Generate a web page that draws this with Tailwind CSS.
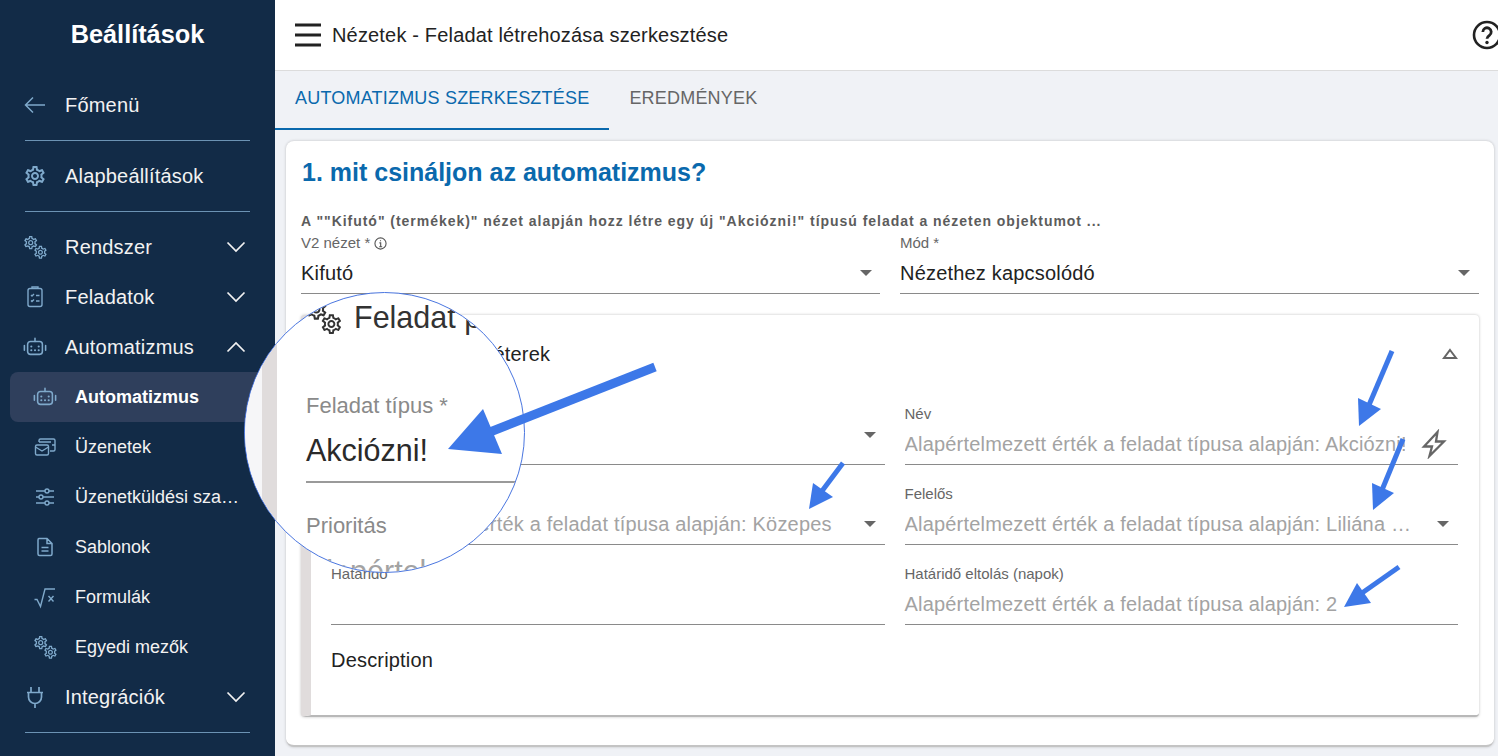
<!DOCTYPE html>
<html lang="hu">
<head>
  <meta charset="UTF-8">
  <meta name="viewport" content="width=device-width, initial-scale=1.0">
  <title>Nézetek - Feladat létrehozása szerkesztése</title>
  <script src="https://cdn.jsdelivr.net/npm/@tailwindcss/browser@4"></script>
</head>
<body class="relative h-[756px] w-[1498px] overflow-hidden bg-[#f0f2f6] font-['Liberation_Sans',Arial,sans-serif] text-[#222]">
  <svg class="absolute h-0 w-0">
    <defs>
      <symbol id="gear" viewBox="0 0 24 24">
        <path fill="currentColor" d="M19.43 12.98c.04-.32.07-.64.07-.98 0-.34-.03-.66-.07-.98l2.11-1.65c.19-.15.24-.42.12-.64l-2-3.46c-.09-.16-.26-.25-.44-.25-.06 0-.12.01-.17.03l-2.49 1c-.52-.4-1.08-.73-1.69-.98l-.38-2.65C14.46 2.18 14.25 2 14 2h-4c-.25 0-.46.18-.49.42l-.38 2.65c-.61.25-1.17.59-1.69.98l-2.49-1c-.06-.02-.12-.03-.18-.03-.17 0-.34.09-.43.25l-2 3.46c-.13.22-.07.49.12.64l2.11 1.65c-.04.32-.07.65-.07.98 0 .33.03.66.07.98l-2.11 1.65c-.19.15-.24.42-.12.64l2 3.46c.09.16.26.25.44.25.06 0 .12-.01.17-.03l2.49-1c.52.4 1.08.73 1.69.98l.38 2.65c.03.24.24.42.49.42h4c.25 0 .46-.18.49-.42l.38-2.65c.61-.25 1.17-.59 1.69-.98l2.49 1c.06.02.12.03.18.03.17 0 .34-.09.43-.25l2-3.46c.12-.22.07-.49-.12-.64l-2.11-1.65zm-1.98-1.71c.04.31.05.52.05.73 0 .21-.02.43-.05.73l-.14 1.13.89.7 1.08.84-.7 1.21-1.27-.51-1.04-.42-.9.68c-.43.32-.84.56-1.25.73l-1.06.43-.16 1.13-.2 1.35h-1.4l-.19-1.35-.16-1.13-1.06-.43c-.43-.18-.83-.41-1.23-.71l-.91-.7-1.06.43-1.27.51-.7-1.21 1.08-.84.89-.7-.14-1.13c-.03-.31-.05-.54-.05-.74s.02-.43.05-.73l.14-1.13-.89-.7-1.08-.84.7-1.21 1.27.51 1.04.42.9-.68c.43-.32.84-.56 1.25-.73l1.06-.43.16-1.13.2-1.35h1.39l.19 1.35.16 1.13 1.06.43c.43.18.83.41 1.23.71l.91.7 1.06-.43 1.27-.51.7 1.21-1.07.85-.89.7.14 1.13zM12 8c-2.21 0-4 1.79-4 4s1.79 4 4 4 4-1.79 4-4-1.79-4-4-4zm0 6c-1.1 0-2-.9-2-2s.9-2 2-2 2 .9 2 2-.9 2-2 2z"/>
      </symbol>
      <symbol id="gears" viewBox="0 0 26 26">
        <use href="#gear" x="0.700" y="0.700" width="16" height="16"/>
        <use href="#gear" x="10.700" y="10.500" width="15.500" height="15.500"/>
      </symbol>
      <symbol id="robot" viewBox="0 0 26 24" fill="none" stroke="currentColor" stroke-width="1.700">
        <rect x="5" y="6" width="16" height="14" rx="3"/>
        <path d="M13 6V2.500M1.500 10.500v5M24.500 10.500v5" stroke-linecap="round"/>
        <path d="M9 11.500h.01M17 11.500h.01M9 15.500h.01M13 15.500h.01M17 15.500h.01" stroke-width="2.300" stroke-linecap="round"/>
      </symbol>
      <symbol id="chev-down" viewBox="0 0 24 24" fill="none" stroke="currentColor" stroke-width="1.700">
        <path d="M3.500 7.500 12 16l8.500-8.500"/>
      </symbol>
    </defs>
  </svg>

  <div class="flex h-full">
    <!-- Oldalsáv -->
    <aside class="h-full w-[275px] shrink-0 bg-[#122b47] text-[#f2f2f2]">
      <div class="h-[80px] pt-[18px] text-center text-[25.300px] leading-[32px] font-bold text-white">Beállítások</div>

      <a class="flex h-[50px] items-center pl-[23px] text-[20px] tracking-[0.190px]">
        <span class="w-[42px] text-[#7fa9cb]">
          <svg class="h-6 w-6" viewBox="0 0 24 24" fill="none" stroke="currentColor" stroke-width="1.500"><path d="M22 12H2.500M10 4.500 2.500 12l7.500 7.500"/></svg>
        </span>
        Főmenü
      </a>
      <div class="mx-[25px] my-[10px] border-t border-[#6c93b4]"></div>
      <a class="flex h-[50px] items-center pl-[23px] text-[20px] tracking-[0.190px]">
        <span class="w-[42px] text-[#7fa9cb]"><svg class="h-6 w-6"><use href="#gear"/></svg></span>
        Alapbeállítások
      </a>
      <div class="mx-[25px] my-[10px] border-t border-[#6c93b4]"></div>

      <a class="flex h-[50px] items-center pl-[23px] text-[20px] tracking-[0.190px]">
        <span class="w-[42px] text-[#7fa9cb]"><svg class="ml-[-1px] h-[26px] w-[26px]"><use href="#gears"/></svg></span>
        Rendszer
        <svg class="mr-[27px] ml-auto h-6 w-6"><use href="#chev-down"/></svg>
      </a>
      <a class="flex h-[50px] items-center pl-[23px] text-[20px] tracking-[0.190px]">
        <span class="w-[42px] text-[#7fa9cb]">
          <svg class="h-6 w-6" viewBox="0 0 24 24" fill="none" stroke="currentColor" stroke-width="1.400"><rect x="5" y="3.500" width="14" height="18" rx="2"/><path d="M9 3.500V2h6v1.500M8 10l1 1 2-2M8 15.500l1 1 2-2M13 10.500h3.500M13 16h3.500"/></svg>
        </span>
        Feladatok
        <svg class="mr-[27px] ml-auto h-6 w-6"><use href="#chev-down"/></svg>
      </a>
      <a class="flex h-[50px] items-center pl-[23px] text-[20px] tracking-[0.190px]">
        <span class="w-[42px] text-[#7fa9cb]"><svg class="h-6 w-6"><use href="#robot"/></svg></span>
        Automatizmus
        <svg class="mr-[27px] ml-auto h-6 w-6 rotate-180"><use href="#chev-down"/></svg>
      </a>

      <a class="ml-[10px] flex h-[50px] items-center rounded-l-lg bg-[#2f3f5c] pl-[23px] text-[18px] font-bold text-white">
        <span class="w-[42px] text-[#7fa9cb]"><svg class="h-6 w-6"><use href="#robot"/></svg></span>
        Automatizmus
      </a>
      <a class="flex h-[50px] items-center pl-[33px] text-[18px]">
        <span class="w-[42px] text-[#7fa9cb]">
          <svg class="h-6 w-6" viewBox="0 0 24 24" fill="none" stroke="currentColor" stroke-width="1.400"><path d="M6 7V5.500A1.500 1.500 0 0 1 7.500 4h13A1.500 1.500 0 0 1 22 5.500v9a1.500 1.500 0 0 1-1.500 1.500H17M6 7h12M19 10h3"/><rect x="2.500" y="10" width="13" height="10" rx="1.500"/><path d="m2.500 12 6.500 4 6.500-4"/></svg>
        </span>
        Üzenetek
      </a>
      <a class="flex h-[50px] items-center pl-[33px] text-[18px]">
        <span class="w-[42px] text-[#7fa9cb]">
          <svg class="h-6 w-6" viewBox="0 0 24 24" fill="none" stroke="currentColor" stroke-width="1.400"><path d="M3 6h9M16 6h5M3 12h3M10 12h11M3 18h9M16 18h5"/><circle cx="14" cy="6" r="2"/><circle cx="8" cy="12" r="2"/><circle cx="14" cy="18" r="2"/></svg>
        </span>
        <span class="w-[165px] truncate">Üzenetküldési szabályok</span>
      </a>
      <a class="flex h-[50px] items-center pl-[33px] text-[18px]">
        <span class="w-[42px] text-[#7fa9cb]">
          <svg class="h-6 w-6" viewBox="0 0 24 24" fill="none" stroke="currentColor" stroke-width="1.500"><path d="M6 3.500h8l5 5V19a1.500 1.500 0 0 1-1.500 1.500h-11A1.500 1.500 0 0 1 5 19V5a1.500 1.500 0 0 1 1-1.500zM14 3.500V8.500h5M8.500 12.500h7M8.500 16h7"/></svg>
        </span>
        Sablonok
      </a>
      <a class="flex h-[50px] items-center pl-[33px] text-[18px]">
        <span class="w-[42px] text-[#7fa9cb]">
          <svg class="h-6 w-6" viewBox="0 0 24 24" fill="none" stroke="currentColor" stroke-width="1.400"><path d="M1.500 14.500H4l3.500 7L12 4h10M15.500 11l5 5.500M20.500 11l-5 5.500"/></svg>
        </span>
        Formulák
      </a>
      <a class="flex h-[50px] items-center pl-[33px] text-[18px]">
        <span class="w-[42px] text-[#7fa9cb]"><svg class="ml-[-1px] h-[26px] w-[26px]"><use href="#gears"/></svg></span>
        Egyedi mezők
      </a>
      <a class="flex h-[50px] items-center pl-[23px] text-[20px] tracking-[0.190px]">
        <span class="w-[42px] text-[#7fa9cb]">
          <svg class="h-6 w-6" viewBox="0 0 24 24" fill="none" stroke="currentColor" stroke-width="1.700"><path d="M8 2v6M16 2v6M4 7.500h16M5.500 7.500V12a6.500 6.500 0 0 0 13 0V7.500M12 18.500V23"/></svg>
        </span>
        Integrációk
        <svg class="mr-[27px] ml-auto h-6 w-6"><use href="#chev-down"/></svg>
      </a>
      <div class="mx-[25px] my-[10px] border-t border-[#6c93b4]"></div>
    </aside>

    <!-- Tartalom -->
    <main class="min-w-0 flex-1">
      <header class="flex h-[71px] items-center border-b border-[#dcdcdc] bg-white pl-[20px]">
        <svg class="h-[26px] w-[26px]" viewBox="0 0 26 26" fill="#222"><rect y="1.500" width="26" height="3"/><rect y="11.500" width="26" height="3"/><rect y="21.500" width="26" height="3"/></svg>
        <span class="ml-[11px] text-[20px] tracking-[0.170px] text-[#222]">Nézetek - Feladat létrehozása szerkesztése</span>
        <svg class="mr-[-4px] ml-auto h-[30px] w-[30px] shrink-0" viewBox="0 0 30 30" fill="none" stroke="#222" stroke-width="2.600"><circle cx="15" cy="15" r="13"/><path d="M10.800 12a4.200 4.200 0 1 1 6.600 3.400c-1.500 1-2.400 1.700-2.400 3.400" stroke-width="2.800"/><circle cx="15" cy="22.500" r="1.700" fill="#222" stroke="none"/></svg>
      </header>

      <nav class="flex h-[59px] text-[18px] tracking-[0.200px]">
        <div class="flex items-center border-b-2 border-[#0a69ad] px-[20px] pb-[2px] text-[#0a69ad]">AUTOMATIZMUS SZERKESZTÉSE</div>
        <div class="flex items-center px-[20px] pb-[4px] text-[#666]">EREDMÉNYEK</div>
      </nav>

      <section class="mt-[11px] ml-[11px] h-[606px] w-[1208px] rounded-lg border-b-2 border-[#c4c4c4] bg-white px-[15px] shadow-[0_0_3px_rgba(0,0,0,0.22)]">
        <h1 class="pt-[15px] pl-px text-[25px] leading-[32px] font-bold text-[#0a69ad]">1. mit csináljon az automatizmus?</h1>
        <p class="mt-[25px] text-[14px] leading-[16px] font-bold tracking-[0.970px] whitespace-nowrap text-[#5c5c5c]">A ""Kifutó" (termékek)" nézet alapján hozz létre egy új "Akciózni!" típusú feladat a nézeten objektumot ...</p>

        <div class="mt-[4px] grid grid-cols-2 gap-x-[20px]">
          <div class="h-[61px] border-b border-[#8a8a8a]">
            <div class="flex items-center gap-1 text-[15px] leading-[20px] text-[#666]">
              V2 nézet *
              <svg class="h-[13px] w-[13px]" viewBox="0 0 14 14" fill="none" stroke="#555" stroke-width="1.200"><circle cx="7" cy="7" r="6"/><path d="M5.800 6.300H7.200V10.500M5.600 10.500h3.200M7 3.500v1.200"/></svg>
            </div>
            <div class="flex h-[40px] items-center pr-[8px] text-[20px] tracking-[0.190px] text-[#222]">
              Kifutó
              <span class="ml-auto h-0 w-0 border-x-[6px] border-t-[6px] border-x-transparent border-t-[#666]"></span>
            </div>
          </div>
          <div class="h-[61px] border-b border-[#8a8a8a]">
            <div class="text-[15px] leading-[20px] text-[#666]">Mód *</div>
            <div class="flex h-[40px] items-center pr-[9px] text-[20px] tracking-[0.190px] text-[#222]">
              Nézethez kapcsolódó
              <span class="ml-auto h-0 w-0 border-x-[6px] border-t-[6px] border-x-transparent border-t-[#666]"></span>
            </div>
          </div>
        </div>

        <!-- Feladat paraméterek kártya -->
        <div class="mt-[21px] h-[402px] rounded border-b-2 border-[#b8b8b8] border-l-[10px] border-l-[#e0dcdc] bg-white pr-[21px] pl-[20px] shadow-[0_0_3px_rgba(0,0,0,0.25)]">
          <div class="flex h-[80px] items-center pb-[2px] text-[20px] tracking-[0.190px] text-[#222]">
            <svg class="mr-[5px] h-[26px] w-[26px] text-[#333]"><use href="#gears"/></svg>
            Feladat paraméterek
            <svg class="ml-auto h-[16px] w-[16px]" viewBox="0 0 16 16" fill="none" stroke="#666" stroke-width="2"><path d="M8 4 14 12H2z"/></svg>
          </div>

          <div class="grid grid-cols-2 gap-x-[20px]">
            <div class="h-[70px] border-b border-[#8a8a8a]">
              <div class="text-[15px] leading-[20px] text-[#666]">Feladat típus *</div>
              <div class="flex h-[40px] items-center pr-[9px] text-[20px] tracking-[0.190px] text-[#222]">
                Akciózni!
                <span class="ml-auto h-0 w-0 border-x-[6px] border-t-[6px] border-x-transparent border-t-[#666]"></span>
              </div>
            </div>
            <div class="h-[70px] border-b border-[#8a8a8a]">
              <div class="pt-[9px] text-[15px] leading-[20px] text-[#666]">Név</div>
              <div class="flex h-[40px] items-center text-[20px] tracking-[0.190px] text-[#a3a3a3]">
                <span class="w-[500px] overflow-hidden whitespace-nowrap">Alapértelmezett érték a feladat típusa alapján: Akciózni!</span>
                <svg class="ml-[14px] h-[30px] w-[30px]" viewBox="0 0 30 30" fill="none" stroke="#666" stroke-width="2.300" stroke-linejoin="miter"><path d="M18.500 3 5 17.500h8L10.500 27 25 12.500h-8z"/></svg>
              </div>
            </div>

            <div class="mt-[9px] h-[71px] border-b border-[#8a8a8a]">
              <div class="pt-[9px] text-[15px] leading-[21px] text-[#666]">Prioritás</div>
              <div class="flex h-[40px] items-center pr-[9px] text-[20px] tracking-[0.190px] text-[#a3a3a3]">
                Alapértelmezett érték a feladat típusa alapján: Közepes
                <span class="ml-auto h-0 w-0 border-x-[6px] border-t-[6px] border-x-transparent border-t-[#666]"></span>
              </div>
            </div>
            <div class="mt-[9px] h-[71px] border-b border-[#8a8a8a]">
              <div class="pt-[9px] text-[15px] leading-[21px] text-[#666]">Felelős</div>
              <div class="flex h-[40px] items-center pr-[9px] text-[20px] tracking-[0.190px] text-[#a3a3a3]">
                <span class="w-[508px] truncate">Alapértelmezett érték a feladat típusa alapján: Liliána Kovács</span>
                <span class="ml-auto h-0 w-0 border-x-[6px] border-t-[6px] border-x-transparent border-t-[#666]"></span>
              </div>
            </div>

            <div class="mt-[9px] h-[71px] border-b border-[#8a8a8a]">
              <div class="pt-[9px] text-[15px] leading-[21px] text-[#666]">Határidő</div>
            </div>
            <div class="mt-[9px] h-[71px] border-b border-[#8a8a8a]">
              <div class="pt-[9px] text-[15px] leading-[21px] text-[#666]">Határidő eltolás (napok)</div>
              <div class="flex h-[40px] items-center text-[20px] tracking-[0.190px] text-[#a3a3a3]">Alapértelmezett érték a feladat típusa alapján: 2</div>
            </div>
          </div>

          <div class="mt-[23px] text-[20px] leading-[24px] tracking-[0.190px] text-[#222]">Description</div>
        </div>
      </section>
    </main>
  </div>

  <!-- Nagyító -->
  <div class="absolute top-[292px] left-[244px] h-[281px] w-[281px] overflow-hidden rounded-full border-[1.500px] border-[#4a76e0] bg-white">
    <div class="absolute top-[22px] left-0 h-full w-[17px] bg-[#f6f6f8]"></div>
    <div class="absolute top-[22px] left-[17px] h-full w-[15px] bg-[#e0dcdc]"></div>
    <svg class="absolute top-[3px] left-[58px] h-[40px] w-[40px] text-[#333]"><use href="#gears"/></svg>
    <div class="absolute top-[6px] left-[109px] text-[30.500px] leading-[36px] whitespace-nowrap text-[#333]">Feladat paraméterek</div>
    <div class="absolute top-[100px] left-[61px] text-[22px] leading-[26px] whitespace-nowrap text-[#8a8a8a]">Feladat típus *</div>
    <div class="absolute top-[139px] left-[61px] text-[30.500px] leading-[36px] whitespace-nowrap text-[#2a2a2a]">Akciózni!</div>
    <div class="absolute top-[188px] left-[61px] h-[2px] w-[230px] bg-[#9a9a9a]"></div>
    <div class="absolute top-[220px] left-[61px] text-[22px] leading-[26px] whitespace-nowrap text-[#8a8a8a]">Prioritás</div>
    <div class="absolute top-[260px] left-[61px] text-[30.500px] leading-[36px] whitespace-nowrap text-[#a3a3a3]">Alapértel</div>
  </div>

  <!-- Nyilak -->
  <svg class="pointer-events-none absolute top-0 left-0 h-[756px] w-[1498px]" viewBox="0 0 1498 756" fill="#3d78e8" stroke="none">
    <path d="M655 367 490 432" stroke="#3d78e8" stroke-width="9"/>
    <path d="M448 449 483 409 502 454z"/>
    <path d="M1392 351 1369 405" stroke="#3d78e8" stroke-width="5"/>
    <path d="M1359 426 1358 398 1381 409z"/>
    <path d="M1403 439 1382 490" stroke="#3d78e8" stroke-width="5"/>
    <path d="M1373 510 1372 483 1394 493z"/>
    <path d="M1399 567 1362 593" stroke="#3d78e8" stroke-width="5"/>
    <path d="M1344 607 1357 583 1371 603z"/>
    <path d="M843 463 822 491" stroke="#3d78e8" stroke-width="5"/>
    <path d="M809 509 813 483 833 497z"/>
  </svg>
</body>
</html>
